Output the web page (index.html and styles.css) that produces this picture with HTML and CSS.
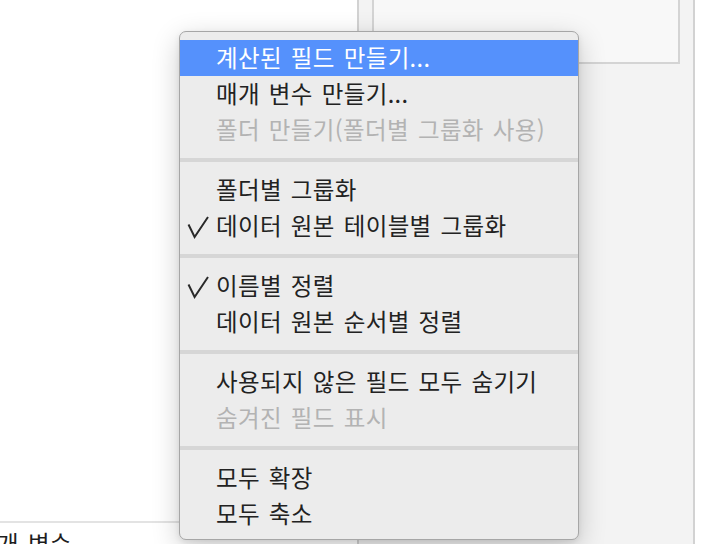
FILE: index.html
```html
<!DOCTYPE html>
<html lang="ko">
<head>
<meta charset="utf-8">
<title>Menu</title>
<link rel="stylesheet" href="styles.css">
</head>
<body>
<div class="app">
  <div class="left-pane">
    <div class="left-body"></div>
    <div class="left-footer"><span class="footer-label">개 변수</span></div>
  </div>
  <div class="middle-pane">
    <div class="card"></div>
  </div>
  <div class="right-pane"></div>
</div>

<div class="menu">
  <div class="item active"><span class="check"></span><span class="label">계산된 필드 만들기...</span></div>
  <div class="item"><span class="check"></span><span class="label">매개 변수 만들기...</span></div>
  <div class="item disabled"><span class="check"></span><span class="label">폴더 만들기(폴더별 그룹화 사용)</span></div>
  <div class="sep"></div>
  <div class="item"><span class="check"></span><span class="label">폴더별 그룹화</span></div>
  <div class="item"><span class="check"><svg width="24" height="24" viewBox="0 0 24 24"><path d="M2.5 8.5 L8.6 21 L22 1" fill="none" stroke="#2a2a2a" stroke-width="2"/></svg></span><span class="label">데이터 원본 테이블별 그룹화</span></div>
  <div class="sep"></div>
  <div class="item"><span class="check"><svg width="24" height="24" viewBox="0 0 24 24"><path d="M2.5 8.5 L8.6 21 L22 1" fill="none" stroke="#2a2a2a" stroke-width="2"/></svg></span><span class="label">이름별 정렬</span></div>
  <div class="item"><span class="check"></span><span class="label">데이터 원본 순서별 정렬</span></div>
  <div class="sep"></div>
  <div class="item"><span class="check"></span><span class="label">사용되지 않은 필드 모두 숨기기</span></div>
  <div class="item disabled"><span class="check"></span><span class="label">숨겨진 필드 표시</span></div>
  <div class="sep"></div>
  <div class="item"><span class="check"></span><span class="label">모두 확장</span></div>
  <div class="item"><span class="check"></span><span class="label">모두 축소</span></div>
</div>
</body>
</html>
```

FILE: styles.css
```css
html, body {
  margin: 0;
  padding: 0;
}
body {
  width: 712px;
  height: 544px;
  overflow: hidden;
  position: relative;
  background: #ffffff;
  font-family: "Noto Sans CJK KR", "Noto Sans", sans-serif;
}
.app {
  display: flex;
  height: 544px;
}
.left-pane {
  width: 357px;
  flex: none;
  display: flex;
  flex-direction: column;
  background: #ffffff;
  border-right: 2px solid #d2d2d2;
}
.left-body {
  height: 521px;
  flex: none;
}
.left-footer {
  border-top: 2px solid #e3e3e3;
  flex: 1;
  overflow: hidden;
}
.footer-label {
  display: block;
  margin-left: -3px;
  margin-top: 5px;
  font-size: 23.5px;
  line-height: 30px;
  color: #1e1e1e;
  letter-spacing: 0.35px;
  word-spacing: 2px;
}
.middle-pane {
  flex: none;
  background: #f3f3f3;
  border-right: 2px solid #d2d2d2;
  padding-left: 13px;
  box-sizing: border-box;
  width: 336px;
}
.card {
  width: 308px;
  height: 64px;
  box-sizing: border-box;
  background: #f8f8f8;
  border-left: 2px solid #d4d4d4;
  border-right: 2px solid #d4d4d4;
  border-bottom: 2px solid #d4d4d4;
}
.right-pane {
  flex: 1;
  background: #ffffff;
}

.menu {
  position: absolute;
  left: 179px;
  top: 31px;
  width: 400px;
  box-sizing: border-box;
  padding: 8px 0 7px;
  background: #ececec;
  border: 1px solid #a6a6a6;
  border-radius: 7px;
  box-shadow: 0 8px 28px rgba(0, 0, 0, 0.2), 0 2px 6px rgba(0, 0, 0, 0.08);
  overflow: hidden;
}
.item {
  display: flex;
  align-items: center;
  height: 36px;
  font-size: 23.5px;
  letter-spacing: 0.35px;
  word-spacing: 2px;
  color: #222222;
  white-space: nowrap;
}
.item.active {
  background: #5591fc;
  color: #ffffff;
}
.item.disabled {
  color: #b3b3b3;
}
.check {
  width: 36px;
  height: 36px;
  flex: none;
  display: flex;
  align-items: center;
}
.check svg {
  margin-left: 6px;
  margin-top: 4px;
}
.label {
  line-height: 36px;
  position: relative;
  top: -1px;
}
.sep {
  height: 4px;
  margin: 10px 0;
  background: #d6d6d6;
}
```
